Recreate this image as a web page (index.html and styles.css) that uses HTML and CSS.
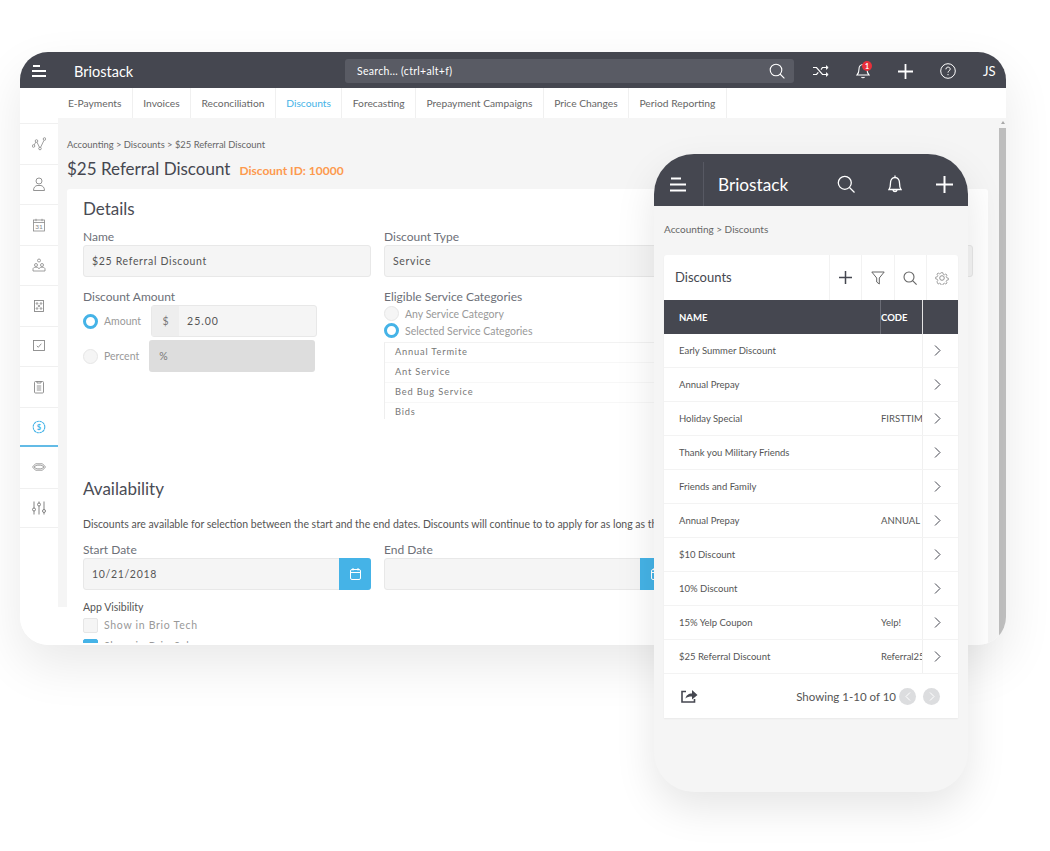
FILE: index.html
```html
<!DOCTYPE html>
<html lang="en">

<head>
    <meta charset="UTF-8">
    <meta name="viewport" content="width=device-width, initial-scale=1.0">
    <title>Briostack</title>
    <link rel="stylesheet" href="styles.css">
</head>

<body>
    <!-- Desktop window -->
    <div class="desktop">
        <header class="topbar">
            <svg class="menu-icon" width="14" height="14" viewBox="0 0 14 14"><path d="M1 2h7M0 7h14M0 12h14" stroke="#fff" stroke-width="2"/></svg>
            <span class="brand">Briostack</span>
            <div class="search">
                <span>Search... (ctrl+alt+f)</span>
                <svg width="16" height="16" viewBox="0 0 16 16" fill="none" stroke="#fff" stroke-width="1.1"><circle cx="7" cy="7" r="5.8"/><path d="M11 11l4.4 4.4"/></svg>
            </div>
            <div class="top-actions">
                <svg class="act-shuffle" width="16" height="12" viewBox="0 0 16 12" fill="none" stroke="#fff" stroke-width="1.2"><path d="M0 2.5h3.5l6 7H14M0 9.5h3.5l1.8-2.2M8 4.6l1.5-2.1H14"/><path d="M13 .5l2.2 2-2.2 2M13 7.5l2.2 2-2.2 2" fill="#fff" stroke-width=".8"/></svg>
                <span class="act-bell">
                    <svg width="14" height="16" viewBox="0 0 14 16" fill="none" stroke="#fff" stroke-width="1.1"><path d="M7 1.5c-2.6 0-4 2-4 4.5 0 3-.9 5-2 6h12c-1.100-1-2-3-2-6 0-2.500-1.400-4.500-4-4.500zM5.500 14c.5 1 2.500 1 3 0"/></svg>
                    <b class="badge">1</b>
                </span>
                <svg class="act-plus" width="15" height="15" viewBox="0 0 15 15"><path d="M7.500 0v15M0 7.500h15" stroke="#fff" stroke-width="1.800"/></svg>
                <svg class="act-help" width="16" height="16" viewBox="0 0 16 16" fill="none" stroke="#fff" stroke-width="1"><circle cx="8" cy="8" r="7.300"/><path d="M5.900 6.300c0-3 4.300-2.800 4.300-.2 0 1.800-2.200 1.700-2.200 3.500M8 11v1.200"/></svg>
                <span class="initials">JS</span>
            </div>
        </header>

        <nav class="tabs">
            <a class="tab">E-Payments</a>
            <a class="tab">Invoices</a>
            <a class="tab">Reconciliation</a>
            <a class="tab active">Discounts</a>
            <a class="tab">Forecasting</a>
            <a class="tab">Prepayment Campaigns</a>
            <a class="tab">Price Changes</a>
            <a class="tab">Period Reporting</a>
        </nav>

        <div class="desk-body">
            <aside class="sidebar">
                <div class="side-item"><svg width="14" height="14" viewBox="0 0 14 14" fill="none" stroke="#888" stroke-width=".8"><circle cx="1.500" cy="9" r="1.300"/><circle cx="4.500" cy="4" r="1.300"/><circle cx="8" cy="11.500" r="1.300"/><circle cx="12.500" cy="2" r="1.300"/><path d="M2.200 7.900l1.600-2.800M5 5.200l2.500 5.200M8.600 10.300l3.400-7"/></svg></div>
                <div class="side-item"><svg width="14" height="14" viewBox="0 0 14 14" fill="none" stroke="#888" stroke-width=".9"><circle cx="7" cy="4" r="3"/><path d="M1.500 13.500c0-3.500 2-4.500 3.500-5h4c1.500.5 3.500 1.500 3.500 5z"/></svg></div>
                <div class="side-item"><svg width="14" height="14" viewBox="0 0 14 14" fill="none" stroke="#888" stroke-width=".8"><rect x="1.500" y="2" width="11" height="11"/><path d="M1.500 4.500h11M4 .8v2.400M10 .8v2.400"/><text x="7" y="11.200" font-size="6.500" font-family="Lato" fill="#888" stroke="none" text-anchor="middle">31</text></svg></div>
                <div class="side-item"><svg width="14" height="14" viewBox="0 0 14 14" fill="none" stroke="#888" stroke-width=".8"><circle cx="7" cy="2.500" r="1.500"/><circle cx="4" cy="7" r="1.500"/><circle cx="10" cy="7" r="1.500"/><path d="M1 13v-2c0-1 1-1.800 3-1.800s3 .8 3 1.800c0-1 1-1.800 3-1.800s3 .8 3 1.800v2z"/></svg></div>
                <div class="side-item"><svg width="14" height="14" viewBox="0 0 14 14" fill="none" stroke="#888" stroke-width=".9"><rect x="2.500" y="1.500" width="9" height="11"/><circle cx="5" cy="4.500" r=".8"/><circle cx="9" cy="4.500" r=".8"/><circle cx="7" cy="7" r=".8"/><circle cx="5" cy="9.500" r=".8"/><circle cx="9" cy="9.500" r=".8"/></svg></div>
                <div class="side-item"><svg width="14" height="14" viewBox="0 0 14 14" fill="none" stroke="#888" stroke-width=".9"><rect x="1.500" y="1.500" width="11" height="10"/><path d="M4.800 6.800l1.500 1.500 3-3.600"/></svg></div>
                <div class="side-item"><svg width="14" height="14" viewBox="0 0 14 14" fill="none" stroke="#888" stroke-width=".9"><rect x="2.500" y="1.500" width="9" height="11.500" rx="1"/><path d="M5 1v2h4V1M4.800 6h4.400M4.800 8h4.400M4.800 10h4.400"/></svg></div>
                <div class="side-item current"><svg width="14" height="14" viewBox="0 0 14 14" fill="none" stroke="#45b3e7" stroke-width="1.100"><circle cx="7" cy="7" r="5.800" stroke-dasharray="2.500 .5"/><text x="7" y="9.700" font-size="7.500" font-weight="700" font-family="Lato" fill="#45b3e7" stroke="none" text-anchor="middle">$</text></svg></div>
                <div class="side-item"><svg width="14" height="14" viewBox="0 0 14 14" fill="none" stroke="#888" stroke-width=".8"><path d="M3.500 3.800h7l3 3.200-3 3.200h-7L.5 7z"/><path d="M2 7c2-2.500 8-2.500 10 0-2 2.500-8 2.500-10 0z"/></svg></div>
                <div class="side-item"><svg width="14" height="14" viewBox="0 0 14 14" fill="none" stroke="#777" stroke-width=".9"><path d="M2 .5v13M7 .5v13M12 .5v13"/><circle cx="2" cy="8.500" r="1.500" fill="#fff"/><circle cx="7" cy="3.500" r="1.500" fill="#fff"/><circle cx="12" cy="10" r="1.500" fill="#fff"/></svg></div>
            </aside>

            <main class="main">
                <div class="crumbs">Accounting &gt; Discounts &gt; $25 Referral Discount</div>
                <div class="page-title">
                    <h1>$25 Referral Discount</h1>
                    <span class="discount-id">Discount ID: 10000</span>
                </div>

                <section class="card">
                    <h2>Details</h2>
                    <div class="form-grid">
                        <div>
                            <label class="lbl">Name</label>
                            <div class="field">$25 Referral Discount</div>
                        </div>
                        <div>
                            <label class="lbl">Discount Type</label>
                            <div class="field">Service</div>
                        </div>
                        <div class="amount-col">
                            <label class="lbl">Discount Amount</label>
                            <div class="amount-row">
                                <i class="radio on"></i><span class="opt">Amount</span>
                                <div class="group"><span class="addon">$</span><span class="group-val">25.00</span></div>
                            </div>
                            <div class="percent-row">
                                <i class="radio"></i><span class="opt">Percent</span>
                                <div class="group-off">%</div>
                            </div>
                        </div>
                        <div class="amount-col">
                            <label class="lbl">Eligible Service Categories</label>
                            <div class="cat-opt"><i class="radio"></i><span class="opt">Any Service Category</span></div>
                            <div class="cat-opt"><i class="radio on"></i><span class="opt">Selected Service Categories</span></div>
                            <ul class="cat-list">
                                <li>Annual Termite</li>
                                <li>Ant Service</li>
                                <li>Bed Bug Service</li>
                                <li>Bids</li>
                            </ul>
                        </div>
                    </div>

                    <h2 class="avail">Availability</h2>
                    <p class="note">Discounts are available for selection between the start and the end dates. Discounts will continue to to apply for as long as they are active.</p>
                    <div class="form-grid date-grid">
                        <div>
                            <label class="lbl">Start Date</label>
                            <div class="field date">10/21/2018<span class="cal"><svg width="13" height="14" viewBox="0 0 13 14" fill="none" stroke="#fff" stroke-width="1"><rect x="1.500" y="2.500" width="10" height="10" rx="1.500"/><path d="M1.500 5.500h10M4 1v2.500M9 1v2.500"/></svg></span></div>
                        </div>
                        <div>
                            <label class="lbl">End Date</label>
                            <div class="field date end"><span class="cal"><svg width="13" height="14" viewBox="0 0 13 14" fill="none" stroke="#fff" stroke-width="1"><rect x="1.500" y="2.500" width="10" height="10" rx="1.500"/><path d="M1.500 5.500h10M4 1v2.500M9 1v2.500"/></svg></span></div>
                        </div>
                    </div>
                    <div class="app-vis">App Visibility</div>
                    <div class="check-row"><i class="check"></i><span>Show in Brio Tech</span></div>
                    <div class="check-row"><i class="check on"></i><span>Show in Brio Sales</span></div>
                </section>
            </main>

            <div class="scroll"><span class="scroll-thumb"></span></div>
        </div>
    </div>

    <!-- Phone window -->
    <div class="phone">
        <header class="phone-top">
            <span class="phone-menu"><svg width="17" height="15" viewBox="0 0 17 15"><path d="M1 1.500h10M0 7.500h16M0 13.500h16" stroke="#fff" stroke-width="2.200"/></svg></span>
            <span class="phone-brand">Briostack</span>
            <svg class="p-search" width="18" height="18" viewBox="0 0 18 18" fill="none" stroke="#fff" stroke-width="1.300"><circle cx="7.800" cy="7.800" r="6.500"/><path d="M12.500 12.500l5 5"/></svg>
            <svg class="p-bell" width="14" height="18" viewBox="0 0 14 18" fill="none" stroke="#fff" stroke-width="1.300"><path d="M7 2.500c-3 0-4.500 2.500-4.500 5.500 0 3-.5 5-1.500 6.500h12c-1-1.500-1.500-3.500-1.500-6.500 0-3-1.500-5.500-4.500-5.500zM7 .5v2M5 15c.4 2 3.600 2 4 0"/></svg>
            <svg class="p-plus" width="17" height="17" viewBox="0 0 17 17"><path d="M8.500 0v17M0 8.500h17" stroke="#fff" stroke-width="2"/></svg>
        </header>
        <div class="phone-crumbs">Accounting &gt; Discounts</div>

        <section class="list-card">
            <div class="list-head">
                <span class="list-title">Discounts</span>
                <span class="tool"><svg width="13" height="13" viewBox="0 0 13 13"><path d="M6.500 0v13M0 6.500h13" stroke="#454750" stroke-width="1.500"/></svg></span>
                <span class="tool"><svg width="14" height="14" viewBox="0 0 14 14" fill="none" stroke="#666" stroke-width="1"><path d="M.8 1h12.400L8.300 7v6L5.700 11V7z"/></svg></span>
                <span class="tool"><svg width="14" height="14" viewBox="0 0 14 14" fill="none" stroke="#666" stroke-width="1.100"><circle cx="6" cy="6" r="5"/><path d="M9.600 9.600l4 4"/></svg></span>
                <span class="tool"><svg width="14" height="14" viewBox="0 0 14 14" fill="none" stroke="#888" stroke-width=".9"><circle cx="7" cy="7" r="2.300"/><path d="M6 .8h2l.4 1.800 1.500.7 1.600-1 1.400 1.400-1 1.600.7 1.500 1.800.4v2l-1.800.4-.7 1.500 1 1.600-1.400 1.400-1.600-1-1.500.7-.4 1.800H6l-.4-1.800-1.500-.7-1.600 1L1.100 11.500l1-1.600-.7-1.500L-.4 8V6l1.800-.4.7-1.500-1-1.600L2.500 1.100l1.600 1 1.500-.7z" transform="translate(1 1) scale(.857)"/></svg></span>
            </div>
            <div class="t-head">
                <span class="t-name">NAME</span>
                <span class="t-code">CODE</span>
                <span class="t-go"></span>
            </div>
            <div class="t-row"><span class="t-name">Early Summer Discount</span><span class="t-code"></span><span class="t-go"><svg width="7" height="11" viewBox="0 0 7 11" fill="none" stroke="#454750"><path d="M1 .5l5 5-5 5"/></svg></span></div>
            <div class="t-row"><span class="t-name">Annual Prepay</span><span class="t-code"></span><span class="t-go"><svg width="7" height="11" viewBox="0 0 7 11" fill="none" stroke="#454750"><path d="M1 .5l5 5-5 5"/></svg></span></div>
            <div class="t-row"><span class="t-name">Holiday Special</span><span class="t-code">FIRSTTIME</span><span class="t-go"><svg width="7" height="11" viewBox="0 0 7 11" fill="none" stroke="#454750"><path d="M1 .5l5 5-5 5"/></svg></span></div>
            <div class="t-row"><span class="t-name">Thank you Military Friends</span><span class="t-code"></span><span class="t-go"><svg width="7" height="11" viewBox="0 0 7 11" fill="none" stroke="#454750"><path d="M1 .5l5 5-5 5"/></svg></span></div>
            <div class="t-row"><span class="t-name">Friends and Family</span><span class="t-code"></span><span class="t-go"><svg width="7" height="11" viewBox="0 0 7 11" fill="none" stroke="#454750"><path d="M1 .5l5 5-5 5"/></svg></span></div>
            <div class="t-row"><span class="t-name">Annual Prepay</span><span class="t-code">ANNUAL</span><span class="t-go"><svg width="7" height="11" viewBox="0 0 7 11" fill="none" stroke="#454750"><path d="M1 .5l5 5-5 5"/></svg></span></div>
            <div class="t-row"><span class="t-name">$10 Discount</span><span class="t-code"></span><span class="t-go"><svg width="7" height="11" viewBox="0 0 7 11" fill="none" stroke="#454750"><path d="M1 .5l5 5-5 5"/></svg></span></div>
            <div class="t-row"><span class="t-name">10% Discount</span><span class="t-code"></span><span class="t-go"><svg width="7" height="11" viewBox="0 0 7 11" fill="none" stroke="#454750"><path d="M1 .5l5 5-5 5"/></svg></span></div>
            <div class="t-row"><span class="t-name">15% Yelp Coupon</span><span class="t-code">Yelp!</span><span class="t-go"><svg width="7" height="11" viewBox="0 0 7 11" fill="none" stroke="#454750"><path d="M1 .5l5 5-5 5"/></svg></span></div>
            <div class="t-row"><span class="t-name">$25 Referral Discount</span><span class="t-code">Referral25</span><span class="t-go"><svg width="7" height="11" viewBox="0 0 7 11" fill="none" stroke="#454750"><path d="M1 .5l5 5-5 5"/></svg></span></div>
            <div class="list-foot">
                <svg width="17" height="14" viewBox="0 0 17 14" fill="none"><path d="M5 2.500H1v10.500h12.500v-3" stroke="#454750" stroke-width="1.600"/><path d="M4.500 9.500c.5-3 3-5 6.500-5V1l5.500 5-5.500 4.500V7.500c-3 0-5 .5-6.500 2z" fill="#454750"/></svg>
                <span class="showing">Showing 1-10 of 10</span>
                <span class="pager"><svg width="6" height="9" viewBox="0 0 6 9" fill="none" stroke="#fff"><path d="M5 .5l-4 4 4 4"/></svg></span>
                <span class="pager"><svg width="6" height="9" viewBox="0 0 6 9" fill="none" stroke="#fff"><path d="M1 .5l4 4-4 4"/></svg></span>
            </div>
        </section>
    </div>
</body>

</html>
```

FILE: styles.css
```css
* {
    box-sizing: border-box;
}

body {
    font-family: Lato, "Open Sans", sans-serif;
    margin: 0;
    height: 851px;
    background-color: #fff;
    color: #555;
    position: relative;
    overflow: hidden;
}

/* Desktop window */
.desktop {
    position: absolute;
    left: 20px;
    top: 52px;
    width: 986px;
    height: 593px;
    border-radius: 28px;
    overflow: hidden;
    background-color: #fff;
    display: flex;
    flex-direction: column;
    box-shadow: 0 20px 50px rgba(0, 0, 0, 0.09);
}

.topbar {
    height: 36px;
    flex: none;
    background-color: #454750;
    display: flex;
    align-items: center;
    color: #fff;
    padding: 2px 0 0 12px;
}

.brand {
    font-size: 14.5px;
    margin-left: 28px;
    width: 271px;
}

.search {
    width: 449px;
    height: 24px;
    background-color: #595b64;
    border-radius: 3px;
    display: flex;
    align-items: center;
    justify-content: space-between;
    padding: 0 9px 0 12px;
    font-size: 10.5px;
    letter-spacing: 0.3px;
}

.top-actions {
    display: flex;
    align-items: center;
    margin-left: 19px;
}

.act-bell {
    position: relative;
    display: flex;
    margin-left: 27px;
}

.badge {
    position: absolute;
    left: 6px;
    top: -2px;
    width: 10px;
    height: 10px;
    border-radius: 50%;
    background-color: #e8303a;
    font-size: 7px;
    line-height: 10px;
    text-align: center;
}

.act-plus {
    margin-left: 28px;
}

.act-help {
    margin-left: 27px;
}

.initials {
    font-size: 13px;
    margin-left: 27px;
}

.tabs {
    height: 30px;
    flex: none;
    display: flex;
    padding-left: 37.500px;
    background-color: #fff;
}

.tab {
    font-size: 10.25px;
    line-height: 30px;
    padding: 0 10.400px;
    color: #666;
    border-right: 1px solid #f0f0f0;
}

.tab.active {
    color: #45b3e7;
}

.desk-body {
    flex: 1;
    min-height: 0;
    display: flex;
}

.sidebar {
    width: 38px;
    flex: none;
    padding-top: 5px;
    background-color: #fff;
}

.side-item {
    height: 40.5px;
    border-top: 1px solid #f0f0f0;
    display: flex;
    align-items: center;
    justify-content: center;
}

.side-item:last-child {
    border-bottom: 1px solid #f0f0f0;
}

.side-item.current {
    border-bottom: 2px solid #63bbe6;
    padding-top: 2px;
}

.side-item.current + .side-item {
    border-top: 0;
}

.main {
    flex: 1;
    min-width: 0;
    padding: 21px 0 0 9px;
    overflow: hidden;
    background: linear-gradient(#fff, #fff) left bottom / 9px 38px no-repeat, #f5f5f5;
}

.crumbs {
    font-size: 9.4px;
    line-height: 12px;
    color: #666;
}

.page-title {
    display: flex;
    align-items: baseline;
    margin-top: 8px;
    height: 20px;
}

.page-title h1 {
    margin: 0;
    font-size: 17px;
    font-weight: 400;
    line-height: 20px;
    color: #454750;
}

.discount-id {
    margin-left: 9px;
    font-size: 12px;
    font-weight: 700;
    color: #fd9a4e;
}

/* bottom border is the white strip under the clipped check row */
.card {
    margin-top: 10px;
    height: 456px;
    overflow: hidden;
    background-color: #fff;
    border-radius: 3px 3px 0 0;
    border-bottom: 2px solid #fff;
    padding: 10px 16px 0;
}

.card h2 {
    margin: 0;
    font-size: 17px;
    font-weight: 400;
    line-height: 20px;
    color: #4a4c55;
}

.form-grid {
    display: grid;
    grid-template-columns: 288px 589px;
    column-gap: 13px;
    margin-top: 11px;
}

.lbl {
    display: block;
    font-size: 12px;
    line-height: 14px;
    margin-bottom: 1px;
    color: #6d7078;
}

.field {
    height: 32px;
    background-color: #f5f5f5;
    border: 1px solid #e8e8e8;
    border-radius: 3px;
    font-size: 10.5px;
    letter-spacing: 0.67px;
    line-height: 31px;
    padding-left: 8px;
    color: #555;
}

.amount-col {
    margin-top: 13px;
}

.amount-row,
.percent-row {
    display: flex;
    align-items: center;
    height: 32px;
}

.percent-row {
    margin-top: 3px;
}

.radio {
    width: 15px;
    height: 15px;
    border-radius: 50%;
    flex: none;
    background-color: #f5f5f5;
    border: 1px solid #e6e6e6;
}

.radio.on {
    background-color: #fff;
    border: 3px solid #45b3e7;
}

.opt {
    margin-left: 6px;
    font-size: 10.5px;
    color: #999;
}

.group {
    margin-left: 10px;
    width: 166px;
    height: 32px;
    display: flex;
    background-color: #f5f5f5;
    border: 1px solid #e8e8e8;
    border-radius: 3px;
    line-height: 30px;
    font-size: 10.5px;
    letter-spacing: 1px;
}

.addon {
    width: 27px;
    text-align: center;
    background-color: #eee;
    color: #777;
    letter-spacing: 0;
}

.group-val {
    padding-left: 8px;
}

.group-off {
    margin-left: 10px;
    width: 166px;
    height: 32px;
    background-color: #ddd;
    border-radius: 3px;
    line-height: 32px;
    font-size: 10.5px;
    padding-left: 10px;
    color: #777;
}

.cat-opt {
    display: flex;
    align-items: center;
    height: 17px;
}

.cat-list {
    list-style: none;
    margin: 3px 0 0;
    padding: 0;
    width: 290px;
    height: 77px;
    overflow: hidden;
    border-left: 1px solid #eee;
    border-top: 1px solid #f2f2f2;
}

.cat-list li {
    height: 20px;
    line-height: 18px;
    font-size: 9.3px;
    letter-spacing: 0.8px;
    padding-left: 10px;
    color: #777;
    border-bottom: 1px solid #f7f7f7;
}

.card h2.avail {
    margin-top: 60px;
}

.note {
    margin: 19px 0 0;
    width: 571px;
    overflow: hidden;
    font-size: 10.5px;
    line-height: 12px;
    white-space: nowrap;
    color: #555;
}

.date-grid {
    margin-top: 13px;
}

.date {
    position: relative;
}

.end {
    width: 288px;
}

.cal {
    position: absolute;
    right: -1px;
    top: -1px;
    width: 32px;
    height: 32px;
    background-color: #45b3e7;
    border-radius: 0 3px 3px 0;
    display: flex;
    align-items: center;
    justify-content: center;
}

.app-vis {
    margin-top: 11px;
    font-size: 10.5px;
    line-height: 13px;
    color: #555;
}

.check-row {
    display: flex;
    align-items: center;
    margin-top: 3px;
    height: 16px;
    font-size: 10.5px;
    letter-spacing: 0.7px;
    color: #999;
}

.check-row + .check-row {
    margin-top: 5px;
}

.check {
    width: 15px;
    height: 15px;
    margin-right: 6px;
    background-color: #f5f5f5;
    border: 1px solid #e6e6e6;
    border-radius: 2px;
}

.check.on {
    background-color: #45b3e7;
    border-color: #45b3e7;
}

.scroll {
    width: 18px;
    flex: none;
    padding: 3px 0 0 11px;
    background-color: #f5f5f5;
}

/* little arrow above the thumb */
.scroll::before {
    content: "";
    display: block;
    width: 0;
    height: 0;
    margin: 0 auto 4px;
    border-left: 2px solid transparent;
    border-right: 2px solid transparent;
    border-bottom: 3px solid #a8a8a8;
}

.scroll-thumb {
    display: block;
    width: 7px;
    height: 100%;
    background-color: #bdbdbd;
}

/* Phone window */
.phone {
    position: absolute;
    left: 654px;
    top: 154px;
    width: 314px;
    height: 638px;
    border-radius: 40px;
    overflow: hidden;
    background-color: #f5f5f5;
    box-shadow: 0 16px 40px rgba(0, 0, 0, 0.1);
}

.phone-top {
    height: 52px;
    padding-top: 8px;
    background-color: #454750;
    display: flex;
    align-items: center;
    color: #fff;
}

.phone-menu {
    width: 50px;
    height: 100%;
    padding: 14px 0 0 16px;
    border-right: 1px solid #575963;
}

.phone-brand {
    margin-left: 14px;
    font-size: 17.2px;
    width: 119px;
}

.p-bell {
    margin-left: 33px;
}

.p-plus {
    margin-left: 33.500px;
}

.phone-crumbs {
    margin: 17px 0 0 10px;
    font-size: 10px;
    line-height: 12px;
    color: #666;
}

.list-card {
    margin: 20px 10px 0;
    background-color: #fff;
    border-radius: 3px 3px 0 0;
    box-shadow: 0 1px 2px rgba(0, 0, 0, 0.05);
}

.list-head {
    height: 45px;
    display: flex;
    align-items: center;
}

.list-title {
    flex: 1;
    padding: 0 0 2px 11px;
    font-size: 13px;
    color: #454750;
}

.tool {
    width: 32.250px;
    height: 100%;
    border-left: 1px solid #f2f2f2;
    display: flex;
    align-items: center;
    justify-content: center;
}

.t-head {
    height: 34px;
    background-color: #454750;
    display: flex;
    align-items: center;
    font-size: 9.5px;
    font-weight: 700;
    color: #fff;
}

.t-head .t-name {
    padding-top: 1px;
}

.t-head .t-code,
.t-head .t-go {
    border-left: 1px solid #6a6c75;
    line-height: 35px;
    padding-left: 0;
}

.t-head .t-go {
    border-left-color: #e4e4e4;
    height: 100%;
}

.t-row {
    height: 34px;
    display: flex;
    align-items: center;
    font-size: 9.500px;
    color: #555;
    border-bottom: 1px solid #f3f3f3;
}

.t-name {
    flex: 1;
    padding-left: 15px;
}

.t-code {
    width: 42px;
    height: 100%;
    padding-left: 1px;
    line-height: 34px;
    overflow: hidden;
    white-space: nowrap;
}

.t-go {
    width: 36px;
    height: 100%;
    padding-right: 6px;
    border-left: 1px solid #f0f0f0;
    display: flex;
    align-items: center;
    justify-content: center;
}

.list-foot {
    height: 44px;
    display: flex;
    align-items: center;
    padding-left: 17px;
}

.showing {
    margin-left: auto;
    margin-right: 3px;
    font-size: 11.5px;
    color: #555;
}

.pager {
    width: 17px;
    height: 17px;
    margin-right: 7px;
    border-radius: 50%;
    background-color: #dcdddf;
    display: flex;
    align-items: center;
    justify-content: center;
}

.pager:last-child {
    margin-right: 18px;
}
```
